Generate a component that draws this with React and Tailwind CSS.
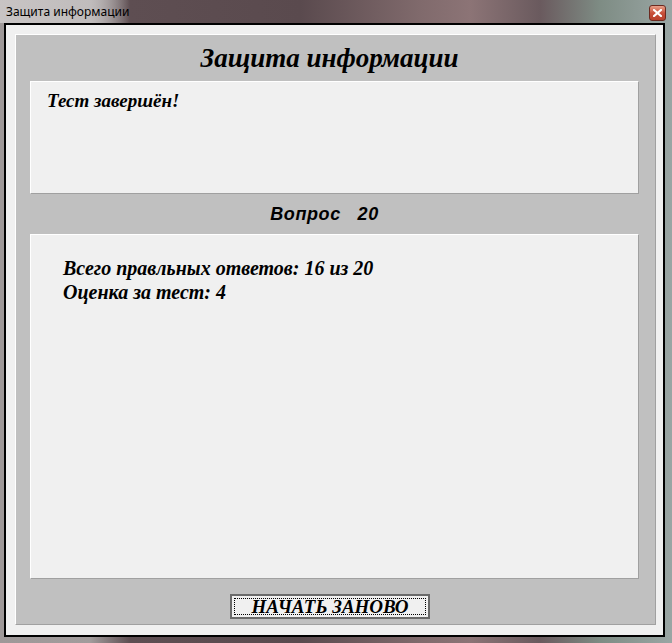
import React from "react";

const serif = { fontFamily: '"Liberation Serif", "Times New Roman", serif' };

const CloseButton = () => (
  <div className="absolute left-[649px] top-[5px] w-[17px] h-[16px] rounded-[3px] border border-[#6b2a20] bg-gradient-to-b from-[#e8a08a] via-[#c8503a] to-[#b8402c] flex items-center justify-center">
    <svg width="9" height="8" viewBox="0 0 9 8">
      <path d="M1 1 L8 7 M8 1 L1 7" stroke="#fff" strokeWidth="2.2" strokeLinecap="square" />
    </svg>
  </div>
);

const App = () => {
  return (
    <div className="relative w-[672px] h-[643px] overflow-hidden bg-[linear-gradient(90deg,#9e9898_0px,#a29c9c_90px,#5e4e52_130px,#5a4a4e_300px,#806a6c_420px,#8c7476_470px,#6a5a5e_540px,#7e8c84_600px,#9aa6a4_672px)]">
      {/* title bar */}
      <div className="h-[23px] relative">
        <div className="absolute left-0 top-0 h-[23px] w-[130px] bg-[linear-gradient(90deg,#c8c4c4_0px,#c0bcbc_90px,transparent_130px)]" />
        <div
          className="absolute left-[6px] top-[4px] text-[12px] leading-[15px] text-black"
          style={{ fontFamily: '"Noto Sans", "DejaVu Sans", sans-serif' }}
        >
          Защита информации
        </div>
        <CloseButton />
      </div>

      {/* client area */}
      <div className="ml-[4px] w-[661px] h-[614px] border-2 border-black bg-[#f0f0f0] pt-[9px] pl-[9px]">
        <div className="w-[641px] h-[591px] bg-[#c0c0c0] border-t border-l border-white border-r border-b border-r-[#a0a0a0] border-b-[#a0a0a0] flex flex-col pl-[14px] pr-[16px]">
          <div
            className="h-[46px] flex items-center justify-center pr-[10px] text-[27px] font-bold italic text-black"
            style={serif}
          >
            Защита информации
          </div>

          <div
            className="h-[113px] bg-[#f0f0f0] border-t border-l border-white border-b border-r border-b-[#a0a0a0] border-r-[#a0a0a0] pl-[16px] pt-[8px] text-[19px] font-bold italic text-black leading-[22px]"
            style={serif}
          >
            Тест завершён!
          </div>

          <div
            className="h-[40px] flex items-center justify-center pr-[20px] text-[18px] tracking-[0.6px] font-bold italic text-black whitespace-pre"
            style={{ fontFamily: '"Liberation Sans", Arial, sans-serif' }}
          >
            Вопрос   20
          </div>

          <div
            className="h-[345px] bg-[#f0f0f0] border-t border-l border-white border-b border-r border-b-[#a0a0a0] border-r-[#a0a0a0] pl-[32px] pt-[21px] text-[20px] font-bold italic text-black leading-[24px]"
            style={serif}
          >
            <div>Всего правльных ответов: 16 из 20</div>
            <div>Оценка за тест: 4</div>
          </div>

          <div className="flex-1 flex items-start justify-center pt-[15px] pr-[9px]">
            <button
              className="w-[200px] h-[25px] bg-[#f0f0f0] border-2 border-[#6a6a6a] p-[2px] text-[19px] font-bold italic text-black"
              style={serif}
            >
              <div className="h-full border border-dotted border-black flex items-center justify-center leading-none">
                НАЧАТЬ ЗАНОВО
              </div>
            </button>
          </div>
        </div>
      </div>
    </div>
  );
};

export default App;
